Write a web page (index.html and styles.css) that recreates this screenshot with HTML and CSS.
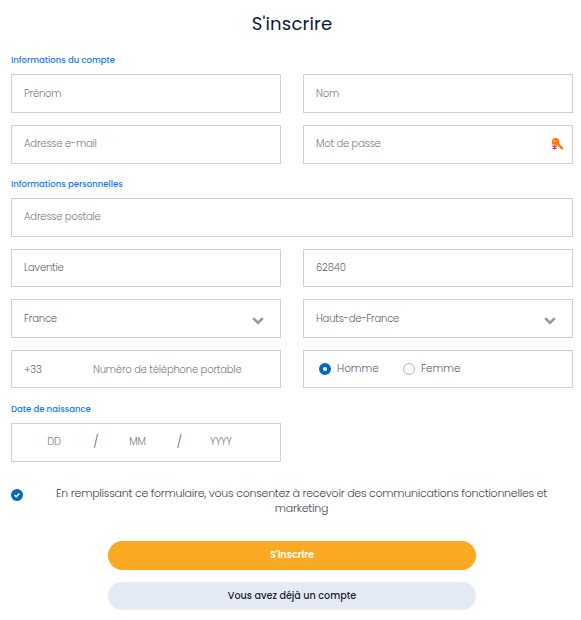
FILE: index.html
```html
<!DOCTYPE html>
<html lang="fr">
<head>
  <meta charset="UTF-8">
  <meta name="viewport" content="width=device-width, initial-scale=1.0">
  <title>S'inscrire</title>
  <link rel="stylesheet" href="styles.css">
</head>
<body>
  <form class="signup">
    <h1>S'inscrire</h1>

    <h2>Informations du compte</h2>
    <div class="grid">
      <input class="field" type="text" placeholder="Prénom">
      <input class="field" type="text" placeholder="Nom">
      <input class="field" type="email" placeholder="Adresse e-mail">
      <div class="field password">
        <input type="password" placeholder="Mot de passe">
        <svg class="key" width="14" height="14" viewBox="0 0 14 14">
          <path d="M6.5 6.5L11 11.3" stroke="#ff7a00" stroke-width="2.5" stroke-linecap="round"/>
          <circle cx="4.6" cy="4.9" r="3.8" fill="#ff7a00"/>
          <path d="M2.2 4.1h2" stroke="#ffe0bd" stroke-width="1.1"/>
          <circle cx="3.6" cy="10" r="2.4" fill="#fff"/>
          <path d="M3.6 7.8v4.6M1.4 8.8L5.8 11.4M5.8 8.8L1.4 11.4" stroke="#de2a55" stroke-width="1.2"/>
        </svg>
      </div>
    </div>

    <h2>Informations personnelles</h2>
    <div class="grid">
      <input class="field wide" type="text" placeholder="Adresse postale">
      <input class="field" type="text" value="Laventie">
      <input class="field" type="text" value="62840">
      <div class="field select">
        <span>France</span>
        <svg class="chevron" width="12" height="8" viewBox="0 0 12 8"><path d="M1.2 1.2L6 6l4.8-4.8"/></svg>
      </div>
      <div class="field select">
        <span>Hauts-de-France</span>
        <svg class="chevron" width="12" height="8" viewBox="0 0 12 8"><path d="M1.2 1.2L6 6l4.8-4.8"/></svg>
      </div>
      <div class="field phone">
        <span class="prefix">+33</span>
        <input type="tel" placeholder="Numéro de téléphone portable">
      </div>
      <div class="field gender">
        <label><input type="radio" name="gender" checked>Homme</label>
        <label><input type="radio" name="gender">Femme</label>
      </div>
    </div>

    <h2>Date de naissance</h2>
    <div class="grid">
      <div class="field birth">
        <input type="text" placeholder="DD">
        <span>/</span>
        <input type="text" placeholder="MM">
        <span>/</span>
        <input type="text" placeholder="YYYY">
      </div>
    </div>

    <div class="consent">
      <svg width="12" height="12" viewBox="0 0 12 12">
        <circle cx="6" cy="6" r="6" fill="#0567c5"/>
        <path d="M3.6 6.1l1.7 1.6 3.1-3.2" fill="none" stroke="#fff" stroke-width="1.6"/>
      </svg>
      <p>En remplissant ce formulaire, vous consentez à recevoir des communications fonctionnelles et marketing</p>
    </div>

    <div class="actions">
      <button class="primary" type="button">S'inscrire</button>
      <button class="secondary" type="button">Vous avez déjà un compte</button>
    </div>
  </form>
</body>
</html>
```
FILE: styles.css
```css
* { box-sizing: border-box; }
body {
  margin: 0;
  background: #fff;
  color: #5d6269;
  font-family: Poppins, Inter, sans-serif;
  font-size: 10px;
  font-weight: 300;
}
.signup { padding: 11.4px 8px 0 11px; }
h1 {
  margin: 0 0 17px;
  color: #0c1738;
  font-size: 18px;
  font-weight: 400;
  line-height: 26px;
  letter-spacing: 0.2px;
  text-align: center;
}
h2 {
  margin: 0;
  height: 20px;
  color: #1279ff;
  font-size: 8.5px;
  font-weight: 500;
  line-height: 12px;
}
.grid {
  display: grid;
  grid-template-columns: repeat(2, minmax(0, 1fr));
  grid-auto-rows: 38.6px;
  gap: 12px 22px;
  margin-bottom: 14.4px;
}
input {
  min-width: 0;
  padding: 0;
  border: 0;
  outline: none;
  background: none;
  color: inherit;
  font: inherit;
  letter-spacing: inherit;
}
input::placeholder { color: #777b82; opacity: 1; }
.field {
  display: flex;
  align-items: center;
  width: 100%;
  padding: 0 12px;
  border: 1px solid #cdd0d8;
  letter-spacing: -0.18px;
}
.wide { grid-column: span 2; }
.password { padding-right: 7px; }
.password input { flex: 1; }
.select { justify-content: space-between; padding: 1px 16px 0 12px; }
.chevron { margin-top: 4px; }
.chevron path { fill: none; stroke: #999; stroke-width: 2.6; }
.prefix { width: 69px; }
.phone { padding-top: 1px; }
.phone input { flex: 1; }
.gender {
  gap: 24px;
  height: 38px;
  padding: 0 15px;
  font-size: 10.5px;
  letter-spacing: 0;
}
.gender label { display: flex; align-items: center; gap: 6px; }
.gender input {
  appearance: none;
  width: 12px;
  height: 12px;
  margin: 0;
  border: 1px solid #aeb3b9;
  border-radius: 50%;
}
.gender input:checked { border: 4px solid #0567c5; }
.birth { height: 39px; padding: 0 20px 0 3px; }
.birth input { flex: 1; text-align: center; }
.birth span { font-size: 12px; }
.consent {
  display: flex;
  gap: 22px;
  margin-top: 24.4px;
  padding-right: 15px;
}
.consent svg { flex: none; margin-top: 3px; }
.consent p {
  flex: 1;
  margin: 0;
  color: #43464c;
  font-size: 11px;
  line-height: 15px;
  letter-spacing: -0.25px;
  text-align: center;
}
.actions {
  display: flex;
  flex-direction: column;
  align-items: center;
  gap: 12px;
  margin-top: 25px;
}
button {
  width: 368px;
  height: 29px;
  padding: 0;
  border: 0;
  border-radius: 15px;
  font: 600 9.6px Poppins, Inter, sans-serif;
}
.primary { background: #fba922; color: #fff; }
.secondary { height: 28px; background: #e5ebf5; color: #1c222e; font-weight: 500; }
```
